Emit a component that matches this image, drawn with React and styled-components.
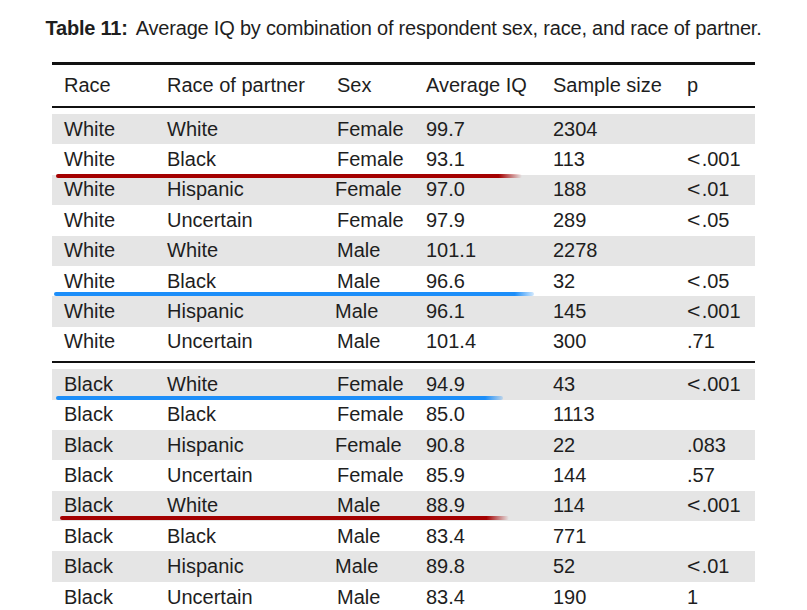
import React from 'react'
import styled, { createGlobalStyle } from 'styled-components';

const GlobalStyle = createGlobalStyle`
  html, body {
    margin: 0;
    padding: 0;
    background: #ffffff;
  }
  body {
    font-family: "Liberation Sans", Arial, sans-serif;
    color: #1e1e1e;
  }
`;

const Page = styled.div`
  width: 807px;
  height: 610px;
  overflow: hidden;
  display: flex;
  flex-direction: column;
  align-items: center;
`;

const Caption = styled.div`
  margin-top: 16px;
  font-size: 20px;
  line-height: 24px;
  white-space: nowrap;
  letter-spacing: -0.2px;

  b {
    font-weight: 700;
    margin-right: 8px;
  }
`;

const Table = styled.div`
  width: 703px;
  margin-top: 22px;
  border-top: 3px solid #111;
  display: flex;
  flex-direction: column;
`;

const Row = styled.div`
  position: relative;
  display: grid;
  grid-template-columns: 103px 170px 89px 127px 134px 1fr;
  padding-left: 12px;
  align-items: center;
  height: ${p => p.head ? '41px' : '30.4px'};
  background: ${p => p.shade ? '#e5e5e5' : 'transparent'};
  font-size: 20px;
  white-space: nowrap;
`;

const Cell = styled.div`
  margin-left: ${p => p.nudge || 0}px;
`;

// math-style "less than" sign, a little wider than the text one
const Lt = styled.span`
  display: inline-block;
  margin-right: 3px;
  transform: scaleX(1.15);
  transform-origin: left center;
`;

const Rule = styled.div`
  height: 2px;
  background: #111;
  margin: ${p => p.gap || '0 0 6px 0'};
`;

// hand-drawn highlighter marks over the table
const Mark = styled.div`
  position: absolute;
  z-index: 1;
  height: 4px;
  border-radius: 2px;
  left: ${p => p.left}px;
  width: ${p => p.width}px;
  bottom: ${p => p.bottom}px;
  background: ${p => p.tone === 'red'
    ? 'linear-gradient(to right, #a40000 0%, #a40000 95%, rgba(164,0,0,0) 100%)'
    : 'linear-gradient(to right, #1c8ef9 0%, #1c8ef9 96%, rgba(28,142,249,0.2) 100%)'};
`;

const headers = ['Race', 'Race of partner', 'Sex', 'Average IQ', 'Sample size', 'p'];

const white = [
  ['White', 'White', 'Female', '99.7', '2304', ''],
  ['White', 'Black', 'Female', '93.1', '113', '<.001', { tone: 'red', left: 4, width: 466, bottom: -3 }],
  ['White', 'Hispanic', 'Female', '97.0', '188', '<.01'],
  ['White', 'Uncertain', 'Female', '97.9', '289', '<.05'],
  ['White', 'White', 'Male', '101.1', '2278', ''],
  ['White', 'Black', 'Male', '96.6', '32', '<.05', { tone: 'blue', left: 2, width: 480, bottom: 0 }],
  ['White', 'Hispanic', 'Male', '96.1', '145', '<.001'],
  ['White', 'Uncertain', 'Male', '101.4', '300', '.71'],
];

const black = [
  ['Black', 'White', 'Female', '94.9', '43', '<.001', { tone: 'blue', left: 4, width: 447, bottom: 0 }],
  ['Black', 'Black', 'Female', '85.0', '1113', ''],
  ['Black', 'Hispanic', 'Female', '90.8', '22', '.083'],
  ['Black', 'Uncertain', 'Female', '85.9', '144', '.57'],
  ['Black', 'White', 'Male', '88.9', '114', '<.001', { tone: 'red', left: 8, width: 449, bottom: 1 }],
  ['Black', 'Black', 'Male', '83.4', '771', ''],
  ['Black', 'Hispanic', 'Male', '89.8', '52', '<.01'],
  ['Black', 'Uncertain', 'Male', '83.4', '190', '1'],
];

const PValue = ({ value }) => {
  if (value.startsWith('<')) {
    return <><Lt>&lt;</Lt>{value.slice(1)}</>;
  }
  return value;
};

const DataRow = ({ row, shade }) => {
  const mark = row[6];
  return (
    <Row shade={shade}>
      {row.slice(0, 5).map((c, i) => (
        <Cell key={i} nudge={i === 2 && row[1] === 'Hispanic' ? -2 : 0}>{c}</Cell>
      ))}
      <Cell><PValue value={row[5]} /></Cell>
      {mark && <Mark {...mark} />}
    </Row>
  );
};

const App = () => {
  return (
    <Page>
      <GlobalStyle />
      <Caption>
        <b>Table 11:</b>Average IQ by combination of respondent sex, race, and race of partner.
      </Caption>
      <Table>
        <Row head>
          {headers.map(h => <Cell key={h}>{h}</Cell>)}
        </Row>
        <Rule />
        {white.map((r, i) => <DataRow key={'w' + i} row={r} shade={i % 2 === 0} />)}
        <Rule gap="4px 0 6px 0" />
        {black.map((r, i) => <DataRow key={'b' + i} row={r} shade={i % 2 === 0} />)}
      </Table>
    </Page>
  );
};

export default App
